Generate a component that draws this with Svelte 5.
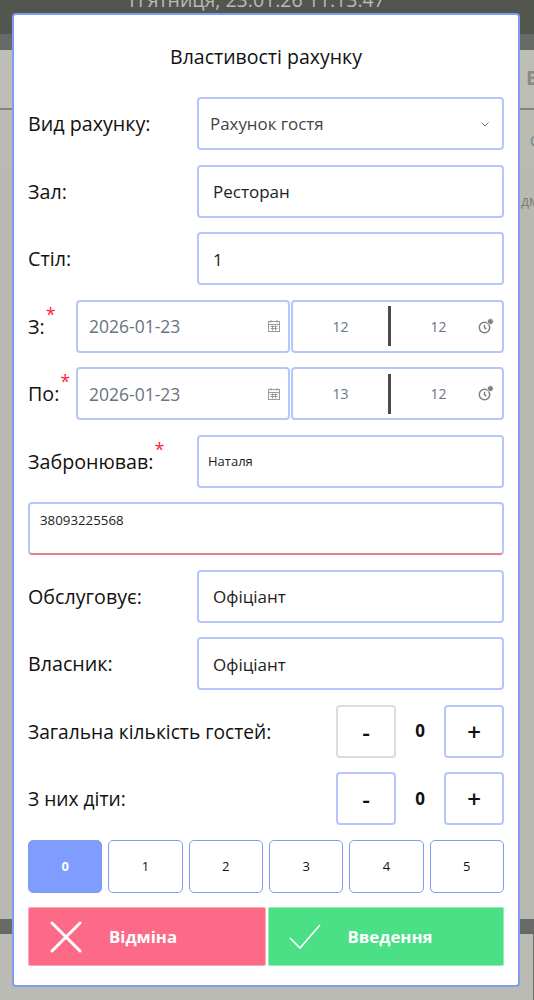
<script lang="ts">
    const kids = [0, 1, 2, 3, 4, 5];
    let guests = $state(0);
    let children = $state(0);
    let selected = $state(0);
</script>

{#snippet calIcon()}
    <svg class="cal" width="14" height="14" viewBox="0 0 14 14" fill="none" stroke="#9a9a9a" stroke-width="1">
        <rect x="1.5" y="2.5" width="11" height="10"></rect>
        <path d="M1.5 5.5h11M4 1v2.5M10 1v2.5M3.5 7.5h7M3.5 9.5h7M5.5 6.5v5M8.5 6.5v5"></path>
    </svg>
{/snippet}

{#snippet clockIcon()}
    <svg class="clock" width="16" height="16" viewBox="0 0 16 16" fill="none" stroke="#808080" stroke-width="1.5">
        <circle cx="6.5" cy="9.5" r="5.2"></circle>
        <path d="M6.5 6.8v2.9l1.8 1.5"></path>
        <circle cx="12.4" cy="3.6" r="3" fill="#808080" stroke="#fff" stroke-width="0.8"></circle>
    </svg>
{/snippet}

<div class="screen">
    <header class="topbar"><span>П'ятниця, 23.01.26 11:13:47</span></header>
    <div class="strip"></div>
    <div class="band"><span class="peek big">В</span></div>
    <div class="band mid"><span class="peek">С</span></div>
    <div class="band tall"><span class="peek">дм</span></div>
    <div class="strip low"></div>
    <div class="rest"></div>

    <div class="modal">
        <h2 class="title">Властивості рахунку</h2>

        <div class="form">
            <div class="row">
                <span class="lbl">Вид рахунку:</span>
                <div class="box select">
                    <span>Рахунок гостя</span>
                    <svg width="10" height="10" viewBox="0 0 10 10" fill="none" stroke="#777" stroke-width="1">
                        <path d="M1.5 3.5L5 7l3.5-3.5"></path>
                    </svg>
                </div>
            </div>
            <div class="row">
                <span class="lbl">Зал:</span>
                <div class="box value">Ресторан</div>
            </div>
            <div class="row">
                <span class="lbl">Стіл:</span>
                <div class="box value">1</div>
            </div>

            <div class="row dates">
                <span class="lbl short">З:<i class="req">*</i></span>
                <div class="box date"><span>2026-01-23</span>{@render calIcon()}</div>
                <div class="box time">
                    <span class="num">12</span><b class="sep"></b><span class="num">12</span>{@render clockIcon()}
                </div>
            </div>
            <div class="row dates">
                <span class="lbl short">По:<i class="req">*</i></span>
                <div class="box date"><span>2026-01-23</span>{@render calIcon()}</div>
                <div class="box time">
                    <span class="num">13</span><b class="sep"></b><span class="num">12</span>{@render clockIcon()}
                </div>
            </div>

            <div class="row">
                <span class="lbl">Забронював:<i class="req">*</i></span>
                <div class="box small">Наталя</div>
            </div>
            <div class="box phone">38093225568</div>

            <div class="row">
                <span class="lbl">Обслуговує:</span>
                <div class="box value">Офіціант</div>
            </div>
            <div class="row">
                <span class="lbl">Власник:</span>
                <div class="box value">Офіціант</div>
            </div>

            <div class="row">
                <span class="lbl wide">Загальна кількість гостей:</span>
                <button class="step off" onclick={() => (guests = Math.max(0, guests - 1))}>-</button>
                <span class="count">{guests}</span>
                <button class="step" onclick={() => guests++}>+</button>
            </div>
            <div class="row">
                <span class="lbl wide">З них діти:</span>
                <button class="step" onclick={() => (children = Math.max(0, children - 1))}>-</button>
                <span class="count">{children}</span>
                <button class="step" onclick={() => children++}>+</button>
            </div>

            <div class="kids">
                {#each kids as n}
                    <button class="kid" class:active={selected === n} onclick={() => (selected = n)}>{n}</button>
                {/each}
            </div>

            <div class="actions">
                <button class="act cancel">
                    <svg width="32" height="32" viewBox="0 0 32 32" fill="none" stroke="#fff" stroke-width="3" stroke-linecap="round">
                        <path d="M2 2l28 28M30 2L2 30"></path>
                    </svg>
                    <span>Відміна</span>
                </button>
                <button class="act ok">
                    <svg width="32" height="26" viewBox="0 0 32 26" fill="none" stroke="#fff" stroke-width="1.6">
                        <path d="M1 14l10 10L31 1"></path>
                    </svg>
                    <span>Введення</span>
                </button>
            </div>
        </div>
    </div>
</div>

<style>
    :global(body) {
        margin: 0;
        font-family: "Open Sans", "Noto Sans", sans-serif;
    }

    .screen {
        position: relative;
        width: 534px;
        height: 1000px;
        overflow: hidden;
        background: #babbb2;
    }

    .topbar {
        height: 34px;
        padding-right: 20px;
        background: #53564f;
        color: #b9bab2;
        font-size: 19.5px;
        text-align: center;
        line-height: 0;
        overflow: hidden;
    }

    .strip {
        height: 16px;
        background: #686a67;
    }

    .strip.low {
        height: 15px;
    }

    .band {
        height: 58px;
        padding-left: 521px;
        background: #bdbeb5;
        border-bottom: 2px solid #85867f;
        color: #7c7d77;
        font-size: 14px;
        line-height: 62px;
        white-space: nowrap;
        overflow: hidden;
    }

    .band.mid {
        border-bottom: none;
        padding-left: 530px;
        background: #babbb2;
    }

    .band.tall {
        height: 751px;
        line-height: 66px;
        border-bottom: none;
        background: #b8b9b0;
    }

    .peek.big {
        display: block;
        margin-left: 5px;
        color: #8a8b86;
        font-size: 19px;
        font-weight: 700;
        line-height: 56px;
    }

    .rest {
        height: 66px;
        border-right: 1px solid #6f706c;
    }

    .modal {
        position: absolute;
        left: 12px;
        top: 13px;
        width: 504px;
        height: 970px;
        background: #fff;
        border: 2px solid #7f9cf5;
        border-radius: 4px;
    }

    .title {
        margin: 0;
        padding-top: 26px;
        height: 55px;
        box-sizing: border-box;
        font-size: 19.5px;
        font-weight: 400;
        line-height: 32px;
        text-align: center;
        color: #111;
    }

    .form {
        display: flex;
        flex-direction: column;
        gap: 14.5px;
        padding: 27px 14px 0 14px;
    }

    .row {
        display: flex;
        align-items: center;
        height: 53px;
    }

    .lbl {
        flex: 0 0 169px;
        font-size: 19.7px;
        color: #111;
        white-space: nowrap;
    }

    .lbl.short {
        flex: 0 0 48px;
    }

    .lbl.wide {
        flex: 1 1 auto;
        font-size: 19.2px;
    }

    .req {
        position: relative;
        top: -13px;
        left: 1px;
        color: #ff1f3d;
        font-style: normal;
        font-size: 18px;
        line-height: 0;
    }

    .box {
        box-sizing: border-box;
        height: 53px;
        flex: 1 1 auto;
        display: flex;
        align-items: center;
        background: #fff;
        border: 2px solid #b5c6fb;
        border-radius: 4px;
        color: #222;
    }

    .select {
        justify-content: space-between;
        padding: 0 12px 0 11px;
        font-size: 16.9px;
        color: #444;
    }

    .value {
        padding-left: 14px;
        padding-top: 1px;
        font-size: 17px;
    }

    .small {
        padding-left: 9px;
        font-size: 13px;
    }

    .phone {
        flex: none;
        align-items: flex-start;
        padding: 7px 0 0 10px;
        font-size: 13.3px;
        border-bottom-color: #e8808a;
    }

    .date {
        flex: 0 0 214px;
        justify-content: space-between;
        padding: 0 7px 0 11px;
        font-size: 17.5px;
        color: #6b7280;
    }

    .cal {
        flex: none;
    }

    .time {
        flex: 1 1 auto;
        margin-left: 1px;
        position: relative;
        padding-right: 16px;
        font-size: 14px;
        color: #6b7280;
    }

    .num {
        flex: 1 1 0;
        text-align: center;
    }

    .sep {
        flex: none;
        width: 3px;
        height: 40px;
        background: #4b4b4b;
    }

    .clock {
        position: absolute;
        right: 8px;
        top: 16px;
    }

    .step {
        box-sizing: border-box;
        flex: 0 0 60px;
        height: 53px;
        padding: 0;
        background: #fff;
        border: 2px solid #b5c6fb;
        border-radius: 4px;
        color: #111;
        font-family: inherit;
        font-size: 24px;
        font-weight: 600;
        cursor: pointer;
    }

    .step.off {
        border-color: #dcdcdc;
    }

    .count {
        flex: 0 0 48px;
        padding-bottom: 1px;
        text-align: center;
        font-size: 17px;
        font-weight: 700;
        color: #111;
    }

    .kids {
        display: flex;
        justify-content: space-between;
        gap: 6px;
    }

    .kid {
        box-sizing: border-box;
        flex: 1 1 0;
        height: 53px;
        padding: 0;
        background: #fff;
        border: 1px solid #7f9cf5;
        border-radius: 5px;
        color: #111;
        font-family: inherit;
        font-size: 13px;
        cursor: pointer;
    }

    .kid.active {
        background: #7f9cff;
        color: #fff;
        font-weight: 700;
    }

    .actions {
        display: flex;
        gap: 2px;
    }

    .act {
        flex: 1 1 0;
        display: flex;
        align-items: center;
        height: 59px;
        padding: 0;
        border: 1px solid rgba(255, 255, 255, 0.4);
        border-radius: 2px;
        color: #fff;
        font-family: inherit;
        font-size: 16.8px;
        font-weight: 700;
        cursor: pointer;
    }

    .act span {
        margin-left: 27px;
    }

    .cancel {
        background: #fd6a87;
        padding-left: 21px;
    }

    .ok {
        background: #4bdf86;
        padding-left: 20px;
    }
</style>
